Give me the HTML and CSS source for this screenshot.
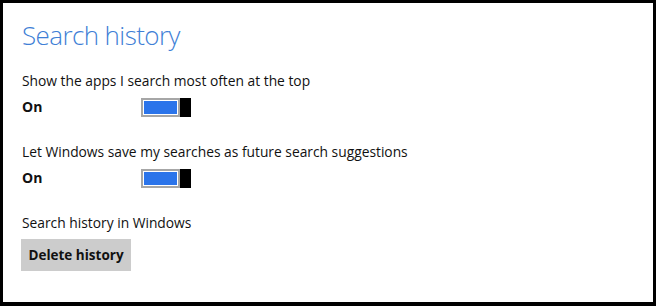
FILE: index.html
```html
<!DOCTYPE html>
<html lang="en">
<head>
    <meta charset="UTF-8">
    <title>Search history</title>
    <link rel="stylesheet" href="styles.css">
</head>
<body>
    <div class="frame">
        <h1 class="title">Search history</h1>

        <div class="setting">
            <div class="setting-label">Show the apps I search most often at the top</div>
            <div class="setting-row">
                <span class="state">On</span>
                <span class="toggle"><span class="track"><span class="fill"></span></span><span class="thumb"></span></span>
            </div>
        </div>

        <div class="setting">
            <div class="setting-label">Let Windows save my searches as future search suggestions</div>
            <div class="setting-row">
                <span class="state">On</span>
                <span class="toggle"><span class="track"><span class="fill"></span></span><span class="thumb"></span></span>
            </div>
        </div>

        <div class="setting">
            <div class="setting-label">Search history in Windows</div>
            <button class="btn">Delete history</button>
        </div>
    </div>
</body>
</html>
```

FILE: styles.css
```css
body {
    margin: 0;
    padding: 0;
    background-color: #000;
    font-family: 'Open Sans', 'Noto Sans', sans-serif;
    color: #111;
}

.frame {
    box-sizing: border-box;
    width: 656px;
    height: 306px;
    background-color: #fff;
    border: 3px solid #000;
    border-bottom-width: 4px;
    padding: 14px 0 0 19px;
}

.title {
    margin: 0;
    font-size: 26px;
    font-weight: 300;
    letter-spacing: -0.6px;
    line-height: 36px;
    color: #3f7fd6;
}

.setting {
    margin-top: 18px;
}

.setting + .setting {
    margin-top: 25px;
}

.setting-label {
    font-size: 13.8px;
    line-height: 20px;
}

.setting-row {
    display: flex;
    align-items: center;
    margin-top: 6px;
}

.state {
    width: 119px;
    font-size: 14px;
    font-weight: bold;
    line-height: 20px;
}

.toggle {
    display: flex;
    height: 19px;
}

.track {
    box-sizing: border-box;
    width: 39px;
    height: 19px;
    border: 2px solid #a6a6a6;
    padding: 1px;
    display: flex;
}

.fill {
    flex: 1;
    background-color: #2b74ea;
}

.thumb {
    width: 11px;
    background-color: #000;
}

.btn {
    display: block;
    margin-top: 6px;
    margin-left: -1px;
    height: 32px;
    width: 110px;
    padding: 0;
    border: none;
    background-color: #cccccc;
    font-family: 'Open Sans', 'Noto Sans', sans-serif;
    font-size: 13.5px;
    font-weight: bold;
    color: #111;
}
```
